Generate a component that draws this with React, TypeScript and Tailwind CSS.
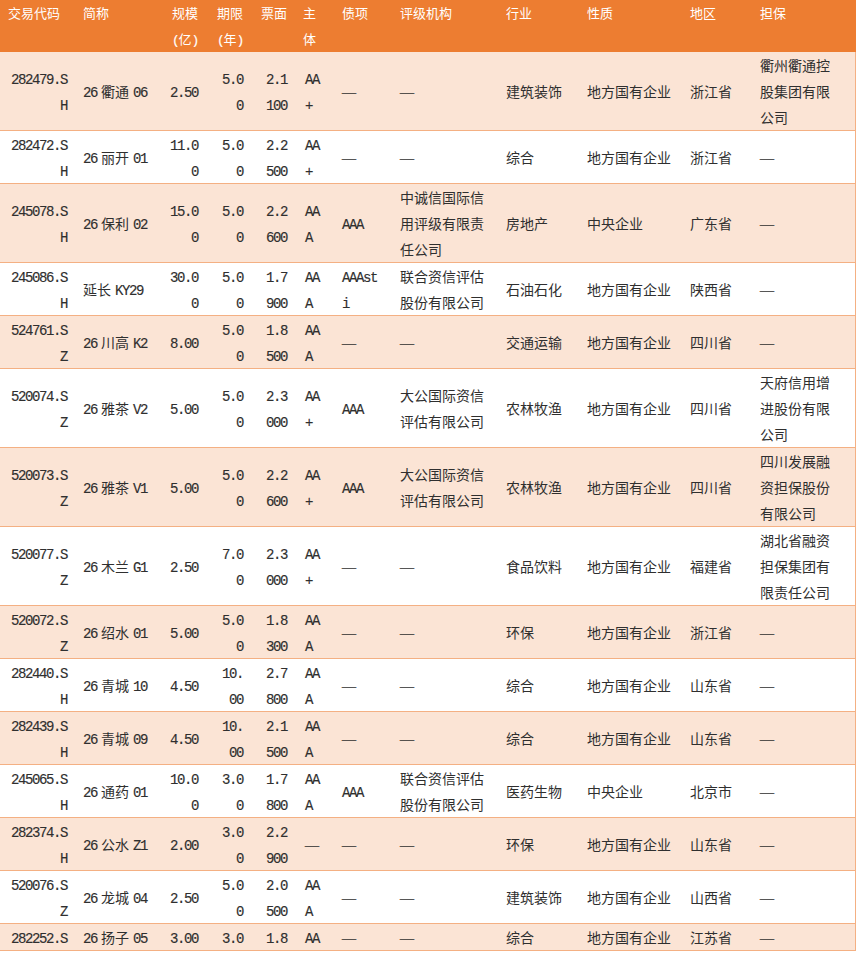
import React from "react";

type Col = {
  head: string[];
  w: string;
  pad: string;
  align: "left" | "right";
};

const cols: Col[] = [
  { head: ["交易代码"], w: "w-[75px]", pad: "pl-[9px] pr-[8px]", align: "right" },
  { head: ["简称"], w: "w-[87px]", pad: "pl-[8px] pr-[8px]", align: "left" },
  { head: ["规模", "(亿)"], w: "w-[44px]", pad: "pl-[6px] pr-[8px]", align: "right" },
  { head: ["期限", "(年)"], w: "w-[45px]", pad: "pl-[13px] pr-[8px]", align: "right" },
  { head: ["票面"], w: "w-[44px]", pad: "pl-[12px] pr-[8px]", align: "right" },
  { head: ["主", "体"], w: "w-[39px]", pad: "pl-[10px] pr-[13px]", align: "left" },
  { head: ["债项"], w: "w-[58px]", pad: "pl-[8px] pr-[12px]", align: "left" },
  { head: ["评级机构"], w: "w-[106px]", pad: "pl-[8px] pr-[8px]", align: "left" },
  { head: ["行业"], w: "w-[81px]", pad: "pl-[8px] pr-[8px]", align: "left" },
  { head: ["性质"], w: "w-[103px]", pad: "pl-[8px] pr-[8px]", align: "left" },
  { head: ["地区"], w: "w-[70px]", pad: "pl-[8px] pr-[8px]", align: "left" },
  { head: ["担保"], w: "w-[103px]", pad: "pl-[8px] pr-[19px]", align: "left" },
];

const rows: string[][] = [
  ["282479.SH", "26衢通06", "2.50", "5.00", "2.1100", "AA+", "—", "—", "建筑装饰", "地方国有企业", "浙江省", "衢州衢通控股集团有限公司"],
  ["282472.SH", "26丽开01", "11.00", "5.00", "2.2500", "AA+", "—", "—", "综合", "地方国有企业", "浙江省", "—"],
  ["245078.SH", "26保利02", "15.00", "5.00", "2.2600", "AAA", "AAA", "中诚信国际信用评级有限责任公司", "房地产", "中央企业", "广东省", "—"],
  ["245086.SH", "延长KY29", "30.00", "5.00", "1.7900", "AAA", "AAAsti", "联合资信评估股份有限公司", "石油石化", "地方国有企业", "陕西省", "—"],
  ["524761.SZ", "26川高K2", "8.00", "5.00", "1.8500", "AAA", "—", "—", "交通运输", "地方国有企业", "四川省", "—"],
  ["520074.SZ", "26雅茶V2", "5.00", "5.00", "2.3000", "AA+", "AAA", "大公国际资信评估有限公司", "农林牧渔", "地方国有企业", "四川省", "天府信用增进股份有限公司"],
  ["520073.SZ", "26雅茶V1", "5.00", "5.00", "2.2600", "AA+", "AAA", "大公国际资信评估有限公司", "农林牧渔", "地方国有企业", "四川省", "四川发展融资担保股份有限公司"],
  ["520077.SZ", "26木兰G1", "2.50", "7.00", "2.3000", "AA+", "—", "—", "食品饮料", "地方国有企业", "福建省", "湖北省融资担保集团有限责任公司"],
  ["520072.SZ", "26绍水01", "5.00", "5.00", "1.8300", "AAA", "—", "—", "环保", "地方国有企业", "浙江省", "—"],
  ["282440.SH", "26青城10", "4.50", "10.00", "2.7800", "AAA", "—", "—", "综合", "地方国有企业", "山东省", "—"],
  ["282439.SH", "26青城09", "4.50", "10.00", "2.1500", "AAA", "—", "—", "综合", "地方国有企业", "山东省", "—"],
  ["245065.SH", "26通药01", "10.00", "3.00", "1.7800", "AAA", "AAA", "联合资信评估股份有限公司", "医药生物", "中央企业", "北京市", "—"],
  ["282374.SH", "26公水Z1", "2.00", "3.00", "2.2900", "—", "—", "—", "环保", "地方国有企业", "山东省", "—"],
  ["520076.SZ", "26龙城04", "2.50", "5.00", "2.0500", "AAA", "—", "—", "建筑装饰", "地方国有企业", "山西省", "—"],
  ["282252.S", "26扬子05", "3.00", "3.0", "1.8", "AA", "—", "—", "综合", "地方国有企业", "江苏省", "—"],
];

const isCjk = (ch: string) => /[\u3000-\u9fff\uff00-\uffef]/.test(ch);

// latin runs get the narrow mono face (7px a char) and a small gap next to CJK
function Txt({ s }: { s: string }) {
  if (s === "—")
    return (
      <span className="font-['Liberation_Serif',serif] leading-none [-webkit-text-stroke:0.3px]">
        —
      </span>
    );
  const runs: { t: string; cjk: boolean }[] = [];
  for (const ch of s) {
    const c = isCjk(ch);
    const last = runs[runs.length - 1];
    if (last && last.cjk === c) last.t += ch;
    else runs.push({ t: ch, cjk: c });
  }
  return (
    <>
      {runs.map((r, i) => {
        const prev = runs[i - 1];
        const gap =
          prev && (r.cjk ? /[A-Za-z0-9]$/.test(prev.t) : /^[A-Za-z0-9]/.test(r.t));
        return (
          <span
            key={i}
            className={
              (r.cjk
                ? ""
                : "font-['Liberation_Mono',monospace] tracking-[-0.1em] leading-none [-webkit-text-stroke:0.15px]") +
              (gap ? " ml-[4px]" : "")
            }
          >
            {r.t}
          </span>
        );
      })}
    </>
  );
}

export default function App() {
  return (
    <div className="w-[857px] h-[955px] bg-white overflow-hidden font-['Noto_Sans_CJK_SC','Liberation_Sans',sans-serif]">
      <div className="w-[856px]">
        <div className="flex bg-[#ED7D31] text-white text-[13px] leading-[26px]">
          {cols.map((c, i) => (
            <div
              key={i}
              className={`${c.w} shrink-0 px-[8px] whitespace-nowrap ${
                c.align === "right" && i > 0 ? "text-right" : "text-left"
              }`}
            >
              {c.head.map((h, j) => (
                <div key={j}>
                  <Txt s={h} />
                </div>
              ))}
            </div>
          ))}
        </div>

        {rows.map((row, r) => (
          <div
            key={r}
            className={`flex items-center border-r border-[#F4B083] text-[14px] leading-[26px] text-[#2f2f2f] ${
              r % 2 === 0 ? "bg-[#FBE4D5]" : "bg-white"
            } ${r > 0 ? "border-t" : ""} ${r === rows.length - 1 ? "border-b" : ""}`}
          >
            {row.map((v, i) => (
              <div
                key={i}
                className={`${cols[i].w} ${cols[i].pad} shrink-0 break-all ${
                  cols[i].align === "right" ? "text-right" : "text-left"
                }`}
              >
                <Txt s={v} />
              </div>
            ))}
          </div>
        ))}
      </div>
    </div>
  );
}
